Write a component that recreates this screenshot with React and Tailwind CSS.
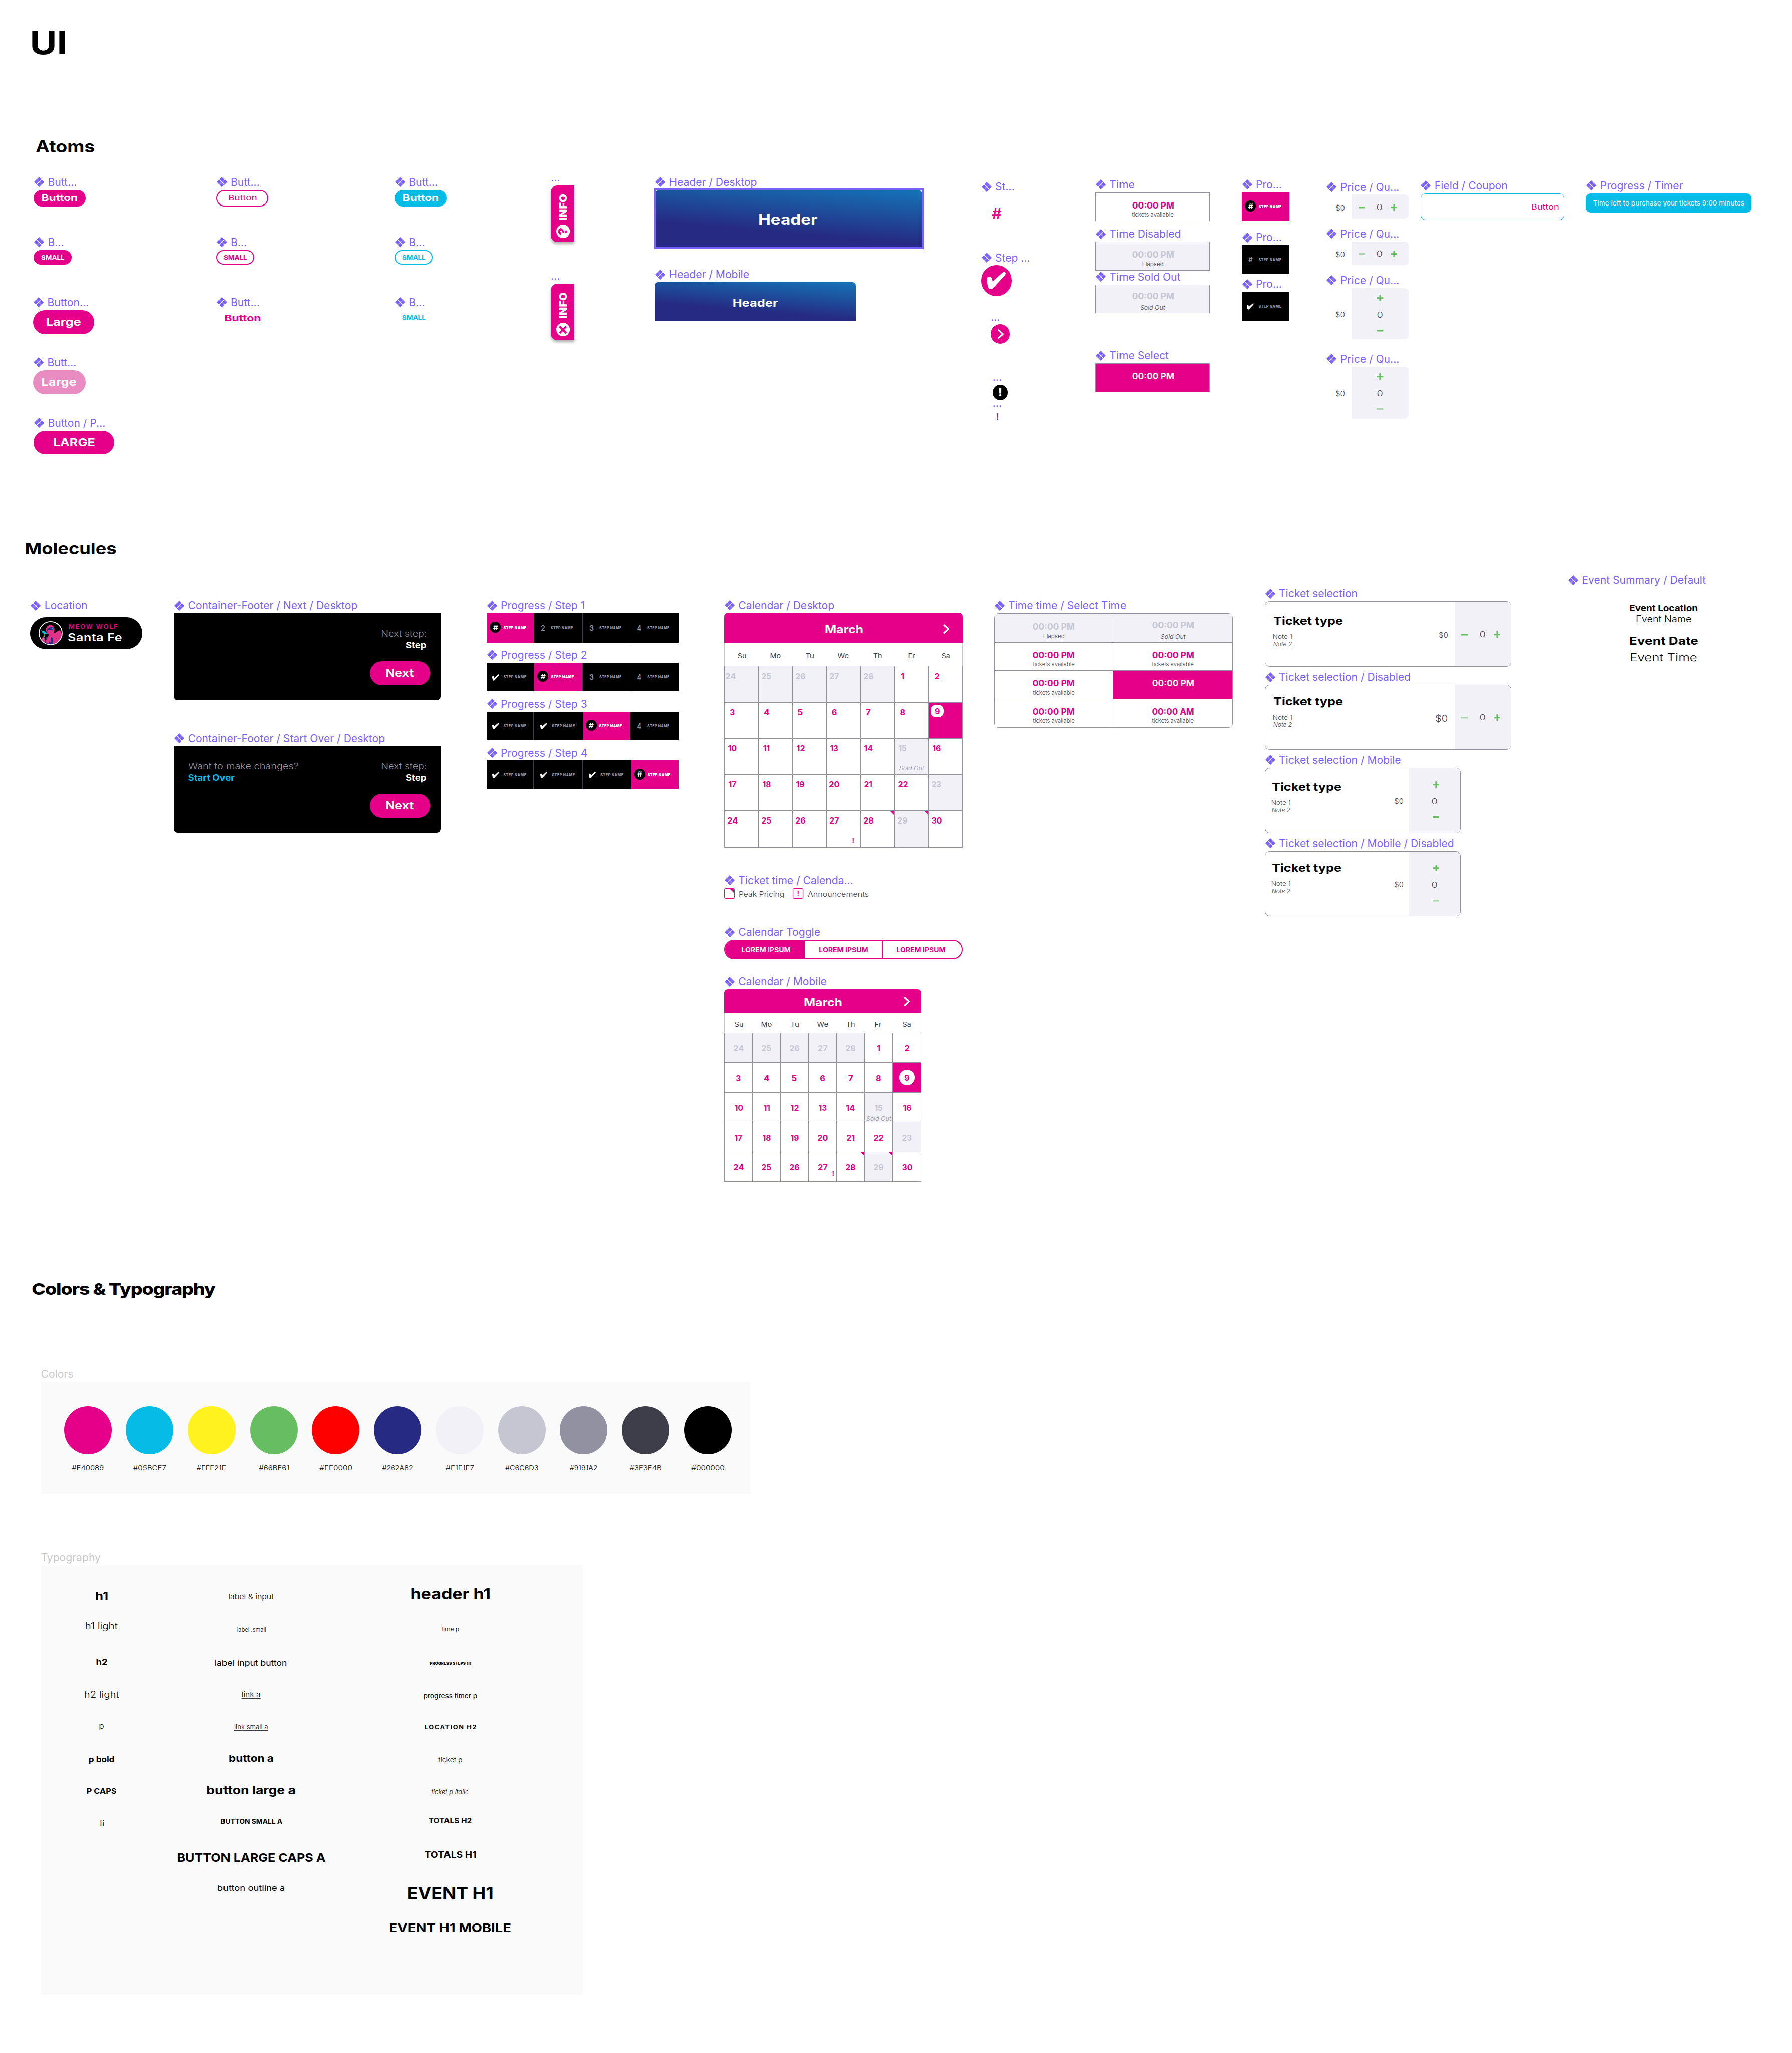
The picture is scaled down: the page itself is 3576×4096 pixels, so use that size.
import React, { useLayoutEffect, useRef, useState } from "react";

let canvas;

/* Text stretched horizontally so that its ink spans `w` pixels and is centred in them. */
function T({ w, className = "", children }) {
  const ref = useRef(null);
  const [transform, setTransform] = useState("none");
  const text = String(children);
  useLayoutEffect(() => {
    const style = getComputedStyle(ref.current);
    canvas = canvas || document.createElement("canvas");
    const ctx = canvas.getContext("2d");
    ctx.font = `${style.fontStyle} ${style.fontWeight} ${style.fontSize} Inter, sans-serif`;
    ctx.letterSpacing = style.letterSpacing === "normal" ? "0px" : style.letterSpacing;
    const m = ctx.measureText(text);
    const ink = m.actualBoundingBoxRight + m.actualBoundingBoxLeft;
    const scale = w / ink;
    const shift = (m.width - m.actualBoundingBoxRight + m.actualBoundingBoxLeft) / 2;
    setTransform(`translate(${shift * scale}px, 0.8px) scaleX(${scale})`);
  }, [w, text]);
  return (
    <span className={`flex shrink-0 justify-center leading-none ${className}`} style={{ width: w }}>
      <span ref={ref} className="shrink-0 whitespace-pre" style={{ transform }}>
        {text}
      </span>
    </span>
  );
}

function ComponentIcon() {
  return (
    <svg viewBox="0 0 21 21" className="h-[21px] w-[21px] shrink-0" fill="#7B61FF">
      <path d="M10.5 0l4.9 4.9-4.9 4.9-4.9-4.9zM10.5 11.2l4.9 4.9-4.9 4.9-4.9-4.9zM4.9 5.6l4.9 4.9-4.9 4.9L0 10.5zM16.1 5.6l4.9 4.9-4.9 4.9-4.9-4.9z" />
    </svg>
  );
}

/* A named component placed on the canvas. */
function Frame({ at, label, bare = false, children }) {
  return (
    <div className={`absolute ${at}`}>
      <div className={`flex h-8 items-center gap-[7.5px] text-[22px] leading-none text-[#7B61FF] ${bare ? "" : "pl-px"}`}>
        {!bare && <ComponentIcon />}
        <span className="whitespace-nowrap">{label}</span>
      </div>
      {children}
    </div>
  );
}

function Check({ className, fill = "#fff" }) {
  return (
    <svg viewBox="0 0 40 37" className={className} fill={fill}>
      <path d="M4 11C8 9.5 11 11 12.3 20.5L33 2C37 -1 41.500 2 38.500 7L14 33.500C10 37.500 5 37 3.500 33C1.500 27 0 18 0 15C.5 12.500 2 11.700 4 11Z" />
    </svg>
  );
}

function Chevron({ className }) {
  return (
    <svg viewBox="0 0 13 20" className={className} fill="none" stroke="#fff" strokeWidth="3.4" strokeLinecap="round" strokeLinejoin="round">
      <path d="M2 2l8.800 8L2 18" />
    </svg>
  );
}

function Plus() {
  return (
    <svg viewBox="0 0 14 14" className="h-[14px] w-[14px] shrink-0" stroke="#66BE61">
      <path d="M0 7h14" strokeWidth="3.200" />
      <path d="M7 0v14" strokeWidth="2.600" />
    </svg>
  );
}

function Minus({ dim }) {
  return (
    <svg viewBox="0 0 14 14" className={`h-[14px] w-[14px] shrink-0 ${dim ? "opacity-50" : ""}`} stroke="#66BE61">
      <path d="M0 7h14" strokeWidth="3.600" />
    </svg>
  );
}

/* ---------- Atoms ---------- */

function Pill({ className, children }) {
  return <div className={`flex items-center justify-center rounded-full ${className}`}>{children}</div>;
}

function InfoTab({ close }) {
  return (
    <div className="flex h-[118px] w-[49px] items-center justify-center rounded-l-[14px] bg-[#E40089] shadow-[0_4px_6px_rgba(0,0,0,0.3)]">
      <div className="flex h-[49px] w-[118px] shrink-0 -rotate-90 items-center pl-[8px] pt-[2px]">
        <div className="flex h-[29px] w-[29px] items-center justify-center rounded-full bg-white">
          {close ? (
            <svg viewBox="0 0 16 16" className="h-[17px] w-[17px]" stroke="#E40089" strokeWidth="4">
              <path d="M1.500 1.500l13 13M14.500 1.500l-13 13" />
            </svg>
          ) : (
            <span className="text-[26px] font-black leading-none text-[#E40089]">?</span>
          )}
        </div>
        <T w={54.5} className="ml-[9px] text-[20.5px] font-black text-white">INFO</T>
      </div>
    </div>
  );
}

function TimeCell({ time = "00:00 PM", kind = "open", className = "" }) {
  const off = kind === "elapsed" || kind === "sold";
  return (
    <div
      className={`flex flex-col items-center ${kind === "sold" ? "pt-[12px]" : "pt-[15px]"} ${
        off ? "bg-[#F1F1F7] text-[#C6C6D3]" : kind === "selected" ? "bg-[#E40089] text-white" : "bg-white text-[#E40089]"
      } ${className}`}
    >
      <div className="flex h-[21px] items-center">
        <T w={87.5} className="text-[17.5px] font-bold">{time}</T>
      </div>
      <div className={`flex h-[18px] items-center text-[#3E3E4B] ${kind === "sold" ? "mt-[5px]" : ""}`}>
        {kind === "open" && <T w={87.5} className="text-[11.5px] font-light">tickets available</T>}
        {kind === "elapsed" && <T w={43} className="text-[11.5px] font-light">Elapsed</T>}
        {kind === "sold" && <T w={52} className="text-[12px] font-light italic">Sold Out</T>}
      </div>
    </div>
  );
}

function StepCell({ kind, n, className = "" }) {
  const active = kind === "active";
  return (
    <div className={`flex h-[60px] shrink-0 border-[#3E3E4B] ${active ? "bg-[#E40089]" : "bg-black"} ${className}`}>
      <div className={`ml-[7px] flex h-[60px] w-[23px] items-center justify-center ${active ? "pb-[3px]" : "pb-px"}`}>
        {active && (
          <div className="flex h-[23px] w-[23px] items-center justify-center rounded-full bg-black">
            <T w={10.5} className="text-[15.5px] font-semibold text-white">#</T>
          </div>
        )}
        {kind === "done" && <Check className="mt-[2px] h-[13.5px] w-[14.5px]" />}
        {kind === "todo" && <T w={9} className="text-[15px] font-semibold text-[#9191A2]">{n}</T>}
      </div>
      <div className="ml-[5px] flex h-[60px] items-center">
        <T
          w={kind === "todo" && n !== "#" ? 46.5 : 48}
          className={`text-[7.2px] tracking-[0.5px] ${active ? "font-black text-white" : "font-extrabold text-[#9191A2]"}`}
        >
          STEP NAME
        </T>
      </div>
    </div>
  );
}

function CounterRow({ dim }) {
  return (
    <div className="flex items-center">
      <Minus dim={dim} />
      <div className="ml-[15px] flex w-[30px] justify-center pb-[3px]">
        <T w={11} className="text-[17px] font-light text-[#3E3E4B]">0</T>
      </div>
      <div className="ml-[8px]"><Plus /></div>
    </div>
  );
}

function CounterColumn({ dim, className = "" }) {
  return (
    <div className="flex flex-col items-center">
      <Plus />
      <div className={`flex h-[53.7px] items-center ${className}`}>
        <T w={11} className="text-[17px] font-light text-[#3E3E4B]">0</T>
      </div>
      <Minus dim={dim} />
    </div>
  );
}

function PriceQuantity({ column, dim }) {
  return (
    <div className="flex w-[171px]">
      <div className="flex w-[53px] items-center pl-[20px] pt-[4px]">
        <T w={18.6} className="text-[15.5px] font-light text-[#3E3E4B]">$0</T>
      </div>
      {column ? (
        <div className="flex h-[107px] w-[118px] justify-center rounded-r-[8px] bg-[#F1F1F7] pt-[14px]">
          <CounterColumn dim={dim} />
        </div>
      ) : (
        <div className="flex h-[50px] w-[118px] items-center rounded-r-[8px] bg-[#F1F1F7] pl-[14px] pt-[2px]">
          <CounterRow dim={dim} />
        </div>
      )}
    </div>
  );
}

/* ---------- Molecules ---------- */

function LocationBadge() {
  return (
    <div className="mt-[7px] flex h-[67px] w-[233px] items-center rounded-full bg-black pl-[17px]">
      <svg viewBox="0 0 50 50" className="h-[50px] w-[50px]">
        <defs>
          <clipPath id="badge"><circle cx="25" cy="25" r="23.500" /></clipPath>
        </defs>
        <g clipPath="url(#badge)">
          <path d="M15 34l10-5 8 3 2 17H15z" fill="#262A82" />
          <path d="M15 17c1-6 6-10 11-9 5 1 7 5 7 10l-1 9-11 1-4-3z" fill="#DE3389" />
          <path d="M17 17c5-5 9-5 14-4l-1 6c-5-2-9-1-13 1z" fill="#262A82" />
          <path d="M22 27l11-2 9-6c4 0 6 4 6 9l3 20H25l-1-9-4 8-6-4z" fill="#DE3389" />
          <path d="M25 32l5 4v12l-7 2 3-10z" fill="#262A82" />
          <path d="M5 38l5-7 4 8v9L4 44z" fill="#DE3389" />
          <path d="M5 19l9 3 3 4-5 1-5-4z" fill="#05BCE7" />
          <path d="M12 26c2 5-2 8-3 13" stroke="#66BE61" strokeWidth="1.200" fill="none" />
          <circle cx="29" cy="15" r="1.400" fill="#05BCE7" />
        </g>
        <circle cx="25" cy="25" r="24" fill="none" stroke="#fff" strokeWidth="1.800" />
      </svg>
      <div className="ml-[12px] flex flex-col">
        <T w={102} className="ml-px text-[12px] font-semibold tracking-[1.500px] text-[#E40089]">MEOW WOLF</T>
        <T w={112} className="mt-[4.500px] text-[22px] font-semibold tracking-[0.5px] text-white">Santa Fe</T>
      </div>
    </div>
  );
}

function ContainerFooter({ startOver }) {
  return (
    <div className="flex h-[180px] w-[555px] justify-between rounded-b-[8px] bg-black pl-[30px] pr-[21px] pt-[29px]">
      <div className="flex flex-col">
        {startOver && (
          <>
            <div className="flex h-[24px] items-center"><T w={228} className="text-[17.4px] font-light text-[#9191A2]">Want to make changes?</T></div>
            <div className="flex h-[24px] items-center"><T w={96} className="text-[17.4px] font-bold text-[#05BCE7]">Start Over</T></div>
          </>
        )}
      </div>
      <div className="flex flex-col items-end">
        <div className="flex h-[24px] items-center pr-[9px]"><T w={93.5} className="text-[17.4px] font-light text-[#9191A2]">Next step:</T></div>
        <div className="flex h-[25px] items-center pr-[9px]"><T w={43} className="text-[17.4px] font-bold text-white">Step</T></div>
        <Pill className="mt-[21px] h-[50px] w-[127px] bg-[#E40089] pb-[3px]">
          <T w={58.5} className="text-[22px] font-bold text-white">Next</T>
        </Pill>
      </div>
    </div>
  );
}

const DAYS = [["Su", 17.5], ["Mo", 21.5], ["Tu", 17], ["We", 23.5], ["Th", 17.5], ["Fr", 13.5], ["Sa", 17]];
const DATES = [24, 25, 26, 27, 28, ...Array.from({ length: 30 }, (_, i) => i + 1)];
const OFF = [0, 1, 2, 3, 4, 19, 27, 33];

function dateWidth(n) {
  const per = { 0: 11.6, 1: 6.8, 2: 10.4, 3: 10.2, 4: 11.8, 5: 10.4, 6: 11, 7: 10.4, 8: 11, 9: 11 };
  return String(n).split("").reduce((sum, d) => sum + per[d], 0) - (n > 9 ? 0.4 : 0);
}

function DateText({ n, className = "" }) {
  return <T w={dateWidth(n)} className={`text-[17px] font-bold ${className}`}>{n}</T>;
}

function Calendar({ mobile }) {
  return (
    <div className={mobile ? "w-[409.5px]" : "w-[496.5px]"}>
      <div className={`flex items-center rounded-t-[8px] bg-[#E40089] ${mobile ? "h-[50px] pl-[167px]" : "h-[61px] pl-[211px]"}`}>
        <T w={78} className={`text-[22.5px] font-bold text-white ${mobile ? "mt-[3px]" : "mt-[4px]"}`}>March</T>
        <Chevron className={mobile ? "ml-[128px] mt-[2px] h-[20px] w-[13px]" : "ml-[166px] mt-[3px] h-[20px] w-[13px]"} />
      </div>
      <div className={`grid grid-cols-7 border-x border-b border-[#C6C6D3] bg-white ${mobile ? "h-[40.5px] pt-[5px]" : "h-[49.5px] pt-[5px]"}`}>
        {DAYS.map(([day, w]) => (
          <div key={day} className="flex items-center justify-center">
            <T w={w} className="text-[13.6px] text-[#3E3E4B]">{day}</T>
          </div>
        ))}
      </div>
      <div className="grid grid-cols-7 border-l border-[#9191A2]">
        {DATES.map((n, i) => {
          const off = OFF.includes(i);
          const selected = i === 13;
          return (
            <div
              key={i}
              className={`relative flex border-b border-r border-[#9191A2] ${
                off ? "bg-[#F1F1F7] text-[#C6C6D3]" : selected ? "bg-[#E40089] text-[#E40089]" : "bg-white text-[#E40089]"
              } ${mobile ? "h-[62px] items-center justify-center" : "h-[75.3px]"}`}
            >
              {mobile ? (
                selected ? (
                  <div className="flex h-[33px] w-[33px] items-center justify-center rounded-full bg-white"><DateText n={n} /></div>
                ) : (
                  <DateText n={n} className="mt-px" />
                )
              ) : selected ? (
                <div className="ml-[4px] mt-[4px] flex h-[27px] w-[27px] items-center justify-center rounded-[11px] bg-white"><DateText n={n} /></div>
              ) : (
                <div className={`flex h-[38px] items-center justify-center ${i === 0 ? "w-[24px]" : "w-[32px]"}`}><DateText n={n} /></div>
              )}
              {i === 19 && (
                <div className={mobile ? "absolute bottom-px left-[2.5px]" : "absolute bottom-[7px] left-[9px]"}>
                  <T w={52.5} className="text-[12px] font-light italic text-[#9191A2]">Sold Out</T>
                </div>
              )}
              {i === 31 && (
                <span className={`absolute text-[14px] font-bold leading-none ${mobile ? "bottom-[8px] right-[4px]" : "bottom-[5px] right-[12px]"}`}>!</span>
              )}
              {(i === 32 || i === 33) && (
                <svg viewBox="0 0 9 9" className={`absolute right-0 top-0 ${mobile ? "h-[7px] w-[7px]" : "h-[9px] w-[9px]"}`} fill="#E40089">
                  <path d="M0 0h9v9z" />
                </svg>
              )}
            </div>
          );
        })}
      </div>
    </div>
  );
}

function TicketSelection({ mobile, dim }) {
  return (
    <div className={`flex h-[135.5px] overflow-hidden rounded-[10px] border border-[#9191A2] bg-white ${mobile ? "w-[407.5px]" : "w-[513px]"}`}>
      <div className={`flex flex-1 flex-col ${mobile ? "pl-[13.5px]" : "pl-[17px]"} ${dim ? "pt-[17px]" : "pt-[22px]"}`}>
        <div className="flex h-8 items-center"><T w={144.5} className="text-[22.5px] font-bold text-black">Ticket type</T></div>
        <div className="mt-[9.5px] flex h-[15.6px] items-center"><T w={38.5} className="text-[12.5px] font-light text-[#3E3E4B]">Note 1</T></div>
        <div className="flex h-[15.6px] items-center"><T w={39.5} className="text-[12.5px] font-light italic text-[#3E3E4B]">Note 2</T></div>
      </div>
      <div className={`flex items-center pt-[4px] ${mobile ? "pr-[13px]" : "pr-[14.500px]"}`}>
        {dim && !mobile ? (
          <T w={25} className="text-[20px] font-light text-[#3E3E4B]">$0</T>
        ) : (
          <T w={18.6} className="text-[15.5px] font-light text-[#3E3E4B]">$0</T>
        )}
      </div>
      {mobile ? (
        <div className="flex w-[105.5px] justify-center bg-[#F1F1F7] pl-[5px] pt-[27px]">
          <CounterColumn dim={dim} className="-ml-[5px]" />
        </div>
      ) : (
        <div className="flex w-[116.5px] items-center bg-[#F1F1F7] pl-[14px] pt-px"><CounterRow dim={dim} /></div>
      )}
    </div>
  );
}

/* ---------- Colors & typography ---------- */

const SWATCHES = [
  ["#E40089", "bg-[#E40089]", 66.5],
  ["#05BCE7", "bg-[#05BCE7]", 68.5],
  ["#FFF21F", "bg-[#FFF21F]", 61],
  ["#66BE61", "bg-[#66BE61]", 63],
  ["#FF0000", "bg-[#FF0000]", 68],
  ["#262A82", "bg-[#262A82]", 64.5],
  ["#F1F1F7", "bg-[#F1F1F7]", 58],
  ["#C6C6D3", "bg-[#C6C6D3]", 69],
  ["#9191A2", "bg-[#9191A2]", 58],
  ["#3E3E4B", "bg-[#3E3E4B]", 66],
  ["#000000", "bg-black", 69],
];

const TYPE_COLUMNS = [
  {
    at: "w-[200px] ml-[27px]",
    rows: [
      ["h1", 25, "mt-[46px] text-[23px] font-bold"],
      ["h1 light", 67, "mt-[31px] text-[19px] font-light"],
      ["h2", 23, "mt-[43px] text-[17.5px] font-bold"],
      ["h2 light", 72, "mt-[35px] text-[19px] font-light"],
      ["p", 9.5, "mt-[34px] text-[17px] font-light"],
      ["p bold", 52.5, "mt-[38px] text-[16px] font-bold"],
      ["P CAPS", 61, "mt-[34.5px] text-[15.5px] font-bold"],
      ["li", 7.5, "mt-[34.5px] text-[17px] font-light"],
    ],
  },
  {
    at: "w-[400px] ml-[10.500px]",
    rows: [
      ["label & input", 94, "mt-[49px] text-[15.5px] font-light"],
      ["label .small", 60, "mt-[36.5px] text-[11.5px] font-light"],
      ["label input button", 148, "mt-[36.5px] text-[16.5px]"],
      ["link a", 38, "mt-[34.5px] text-[15.5px] font-light underline decoration-1 underline-offset-2"],
      ["link small a", 69, "mt-[34.5px] text-[13.5px] font-light underline decoration-1 underline-offset-2"],
      ["button a", 92, "mt-[35px] text-[19.5px] font-bold"],
      ["button large a", 183, "mt-[33.5px] text-[24px] font-bold"],
      ["BUTTON SMALL A", 128, "mt-[33px] text-[13.5px] font-bold"],
      ["BUTTON LARGE CAPS A", 307, "mt-[42px] text-[23.5px] font-bold"],
      ["button outline a", 138, "mt-[31px] text-[16px]"],
    ],
  },
  {
    at: "w-[400px] ml-[14.500px]",
    rows: [
      ["header h1", 163.5, "mt-[42px] text-[31.5px] font-bold"],
      ["time p", 36, "mt-[43px] text-[11.5px] font-light"],
      ["PROGRESS STEPS H1", 85, "mt-[38.5px] text-[7.2px] font-black tracking-[0.3px]"],
      ["progress timer p", 110, "mt-[35px] text-[13.5px]"],
      ["LOCATION H2", 106.5, "mt-[34px] text-[12px] font-bold tracking-[1.500px]"],
      ["ticket p", 49, "mt-[35px] text-[13.5px] font-light"],
      ["ticket p italic", 77.5, "mt-[35px] text-[13.500px] font-light italic"],
      ["TOTALS H2", 89, "mt-[28.5px] text-[14.5px] font-bold"],
      ["TOTALS H1", 107, "mt-[38px] text-[17.5px] font-bold"],
      ["EVENT H1", 175, "mt-[47px] text-[35px] font-bold"],
      ["EVENT H1 MOBILE", 252, "mt-[41px] text-[26px] font-bold"],
    ],
  },
];

export default function App() {
  return (
    <div className="h-screen w-full overflow-hidden bg-white">
      <div className="relative h-[4270px] w-[3728px] bg-white font-['Inter',sans-serif] text-black [zoom:0.95923]">
        <h1 className="absolute left-[67px] top-[55px] text-[66px] font-bold leading-none"><T w={69}>UI</T></h1>

        {/* Atoms */}
        <h2 className="absolute left-[74px] top-[287px] text-[34px] font-bold"><T w={122}>Atoms</T></h2>

        <Frame at="left-[70px] top-[363px]" label="Butt...">
          <Pill className="h-[35px] w-[108px] bg-[#E40089] pb-[3px]"><T w={73.5} className="text-[17.5px] font-bold text-white">Button</T></Pill>
        </Frame>
        <Frame at="left-[450px] top-[363px]" label="Butt...">
          <Pill className="h-[35px] w-[108px] border-[2.2px] border-[#E40089] pb-[3px]"><T w={57.5} className="text-[15.5px] text-[#E40089]">Button</T></Pill>
        </Frame>
        <Frame at="left-[821.5px] top-[363px]" label="Butt...">
          <Pill className="h-[35px] w-[108px] bg-[#05BCE7] pb-[3px]"><T w={73.5} className="text-[17.5px] font-bold text-white">Button</T></Pill>
        </Frame>

        <Frame at="left-[70px] top-[488px]" label="B...">
          <Pill className="h-[30px] w-[79px] bg-[#E40089]"><T w={48.5} className="text-[12.8px] font-bold text-white">SMALL</T></Pill>
        </Frame>
        <Frame at="left-[450px] top-[488px]" label="B...">
          <Pill className="h-[30px] w-[79px] border-[2.2px] border-[#E40089]"><T w={48.5} className="text-[12.8px] font-bold text-[#E40089]">SMALL</T></Pill>
        </Frame>
        <Frame at="left-[821.5px] top-[488px]" label="B...">
          <Pill className="h-[30px] w-[79px] border-[2.2px] border-[#05BCE7]"><T w={48.5} className="text-[12.8px] font-bold text-[#05BCE7]">SMALL</T></Pill>
        </Frame>

        <Frame at="left-[69px] top-[613px]" label="Button...">
          <Pill className="h-[50px] w-[127px] bg-[#E40089] pb-[3px]"><T w={72} className="text-[22px] font-bold text-white">Large</T></Pill>
        </Frame>
        <Frame at="left-[450px] top-[613px]" label="Butt...">
          <Pill className="h-[33px] w-[108px]"><T w={74} className="text-[17.5px] font-bold text-[#E40089]">Button</T></Pill>
        </Frame>
        <Frame at="left-[821.5px] top-[613px]" label="B...">
          <Pill className="h-[31px] w-[79px]"><T w={49} className="text-[12.8px] font-bold text-[#05BCE7]">SMALL</T></Pill>
        </Frame>

        <Frame at="left-[69px] top-[738px]" label="Butt...">
          <Pill className="h-[50px] w-[109px] bg-[#E88CC2] pb-[3px]"><T w={72} className="text-[22px] font-bold text-white">Large</T></Pill>
        </Frame>
        <Frame at="left-[70px] top-[863px]" label="Button / P...">
          <Pill className="h-[50px] w-[168px] bg-[#E40089] pb-[2px]"><T w={86} className="text-[22px] font-bold text-white">LARGE</T></Pill>
        </Frame>

        <Frame at="left-[1146px] top-[354px]" label="..." bare><InfoTab /></Frame>
        <Frame at="left-[1146px] top-[558px]" label="..." bare><InfoTab close /></Frame>

        <Frame at="left-[1362.5px] top-[362.5px]" label="Header / Desktop">
          <div className="-ml-[2.5px] -mt-[2.5px] h-[126px] w-[561px] border-[4.2px] border-[#7B61FF] bg-white">
            <div className="flex h-full items-center justify-center rounded-t-[5px] bg-[linear-gradient(5deg,#262A82_32%,#1574B7_100%)]">
              <T w={121} className="text-[30.5px] font-bold text-white">Header</T>
            </div>
          </div>
        </Frame>
        <Frame at="left-[1362.5px] top-[555px]" label="Header / Mobile">
          <div className="flex h-[80px] w-[418.500px] items-center justify-center rounded-t-[7px] bg-[linear-gradient(5deg,#262A82_32%,#1574B7_100%)] pt-[3px]">
            <T w={93} className="text-[23px] font-bold text-white">Header</T>
          </div>
        </Frame>

        <Frame at="left-[2041px] top-[372.5px]" label="St...">
          <div className="flex h-[76px] w-[65px] items-center justify-center"><T w={21} className="text-[30.5px] font-semibold text-[#E40089]">#</T></div>
        </Frame>
        <Frame at="left-[2041px] top-[520px]" label="Step ...">
          <div className="flex h-[64px] w-[64px] items-center justify-center rounded-full bg-[#E40089]"><Check className="h-[37px] w-[40px]" /></div>
        </Frame>
        <Frame at="left-[2061px] top-[643px]" label="..." bare>
          <div className="flex h-[40px] w-[40px] items-center justify-center rounded-full bg-[#E40089] pl-[2px]"><Chevron className="h-[20px] w-[13px]" /></div>
        </Frame>
        <Frame at="left-[2065px] top-[769px]" label="..." bare>
          <div className="flex h-[31.5px] w-[31.5px] items-center justify-center rounded-full bg-black text-[24px] font-extrabold leading-none text-white">!</div>
        </Frame>
        <Frame at="left-[2065px] top-[823px]" label="..." bare>
          <div className="flex h-[21px] w-[20px] items-center justify-center text-[18px] font-bold leading-none text-[#E40089]">!</div>
        </Frame>

        <Frame at="left-[2279px] top-[368px]" label="Time"><TimeCell className="h-[60px] w-[238px] border border-[#9191A2]" /></Frame>
        <Frame at="left-[2279px] top-[470.5px]" label="Time Disabled"><TimeCell kind="elapsed" className="h-[60px] w-[238px] border border-[#9191A2]" /></Frame>
        <Frame at="left-[2279px] top-[560px]" label="Time Sold Out"><TimeCell kind="sold" className="h-[60px] w-[238px] border border-[#9191A2]" /></Frame>
        <Frame at="left-[2279px] top-[724px]" label="Time Select"><TimeCell kind="selected" className="h-[60px] w-[238px] border border-[#9191A2]" /></Frame>

        <Frame at="left-[2583px] top-[368px]" label="Pro..."><StepCell kind="active" className="w-[99px]" /></Frame>
        <Frame at="left-[2583px] top-[478px]" label="Pro..."><StepCell kind="todo" n="#" className="w-[99px]" /></Frame>
        <Frame at="left-[2583px] top-[575px]" label="Pro..."><StepCell kind="done" className="w-[99px]" /></Frame>

        <Frame at="left-[2759px] top-[373px]" label="Price / Qu..."><PriceQuantity /></Frame>
        <Frame at="left-[2759px] top-[470px]" label="Price / Qu..."><PriceQuantity dim /></Frame>
        <Frame at="left-[2759px] top-[567px]" label="Price / Qu..."><PriceQuantity column /></Frame>
        <Frame at="left-[2759px] top-[731px]" label="Price / Qu..."><PriceQuantity column dim /></Frame>

        <Frame at="left-[2955px] top-[370px]" label="Field / Coupon">
          <div className="flex h-[56px] w-[300px] items-center justify-end rounded-[10px] border-[1.5px] border-[#05BCE7] pr-[11px] pt-px">
            <T w={56} className="text-[15.5px] text-[#E40089]">Button</T>
          </div>
        </Frame>
        <Frame at="left-[3299px] top-[370px]" label="Progress / Timer">
          <div className="flex h-[40px] w-[345px] items-center justify-center rounded-[10px] bg-[#05BCE7]">
            <T w={315} className="text-[13.5px] text-white">Time left to purchase your tickets 9:00 minutes</T>
          </div>
        </Frame>

        {/* Molecules */}
        <h2 className="absolute left-[54px] top-[1123.5px] text-[33px] font-bold"><T w={188}>Molecules</T></h2>

        <Frame at="left-[63px] top-[1244px]" label="Location"><LocationBadge /></Frame>
        <Frame at="left-[362px] top-[1244px]" label="Container-Footer / Next / Desktop"><ContainerFooter /></Frame>
        <Frame at="left-[362px] top-[1520px]" label="Container-Footer / Start Over / Desktop"><ContainerFooter startOver /></Frame>

        <Frame at="left-[1012px] top-[1244px]" label="Progress / Step 1">
          <div className="flex">
            <StepCell kind="active" className="w-[99px]" />
            <StepCell kind="todo" n="2" className="w-[101px] border-r-[2.2px]" />
            <StepCell kind="todo" n="3" className="w-[100px] border-r" />
            <StepCell kind="todo" n="4" className="w-[100px]" />
          </div>
        </Frame>
        <Frame at="left-[1012px] top-[1346px]" label="Progress / Step 2">
          <div className="flex">
            <StepCell kind="done" className="w-[99px]" />
            <StepCell kind="active" className="w-[101px] border-r-[2.2px]" />
            <StepCell kind="todo" n="3" className="w-[100px] border-r" />
            <StepCell kind="todo" n="4" className="w-[100px]" />
          </div>
        </Frame>
        <Frame at="left-[1012px] top-[1448px]" label="Progress / Step 3">
          <div className="flex">
            <StepCell kind="done" className="w-[99px] border-r-[2.2px]" />
            <StepCell kind="done" className="w-[101px] pl-[2px]" />
            <StepCell kind="active" className="w-[100px] border-r" />
            <StepCell kind="todo" n="4" className="w-[100px]" />
          </div>
        </Frame>
        <Frame at="left-[1012px] top-[1550px]" label="Progress / Step 4">
          <div className="flex">
            <StepCell kind="done" className="w-[99px] border-r-[2.2px]" />
            <StepCell kind="done" className="w-[103px] border-r-[2.2px] pl-[2px]" />
            <StepCell kind="done" className="w-[99px]" />
            <StepCell kind="active" className="w-[99px]" />
          </div>
        </Frame>

        <Frame at="left-[1506.5px] top-[1243.5px]" label="Calendar / Desktop"><Calendar /></Frame>
        <Frame at="left-[1506.5px] top-[1815px]" label="Ticket time / Calenda...">
          <div className="flex items-center">
            <div className="relative h-[22px] w-[22px] rounded-[3px] border border-[#E40089]">
              <svg viewBox="0 0 8 8" className="absolute right-[1px] top-[1px] h-[7.5px] w-[7.5px]" fill="#E40089"><path d="M0 0h8v8z" /></svg>
            </div>
            <T w={93} className="ml-[9px] mt-[3px] text-[15px] font-light text-[#3E3E4B]">Peak Pricing</T>
            <div className="ml-[19px] flex h-[22px] w-[22px] items-center justify-center rounded-[3px] border border-[#E40089] text-[14px] font-bold leading-none text-[#E40089]">!</div>
            <T w={126.5} className="ml-[9.5px] mt-[2px] text-[15px] font-light text-[#3E3E4B]">Announcements</T>
          </div>
        </Frame>
        <Frame at="left-[1506.5px] top-[1923px]" label="Calendar Toggle">
          <div className="flex h-[40px] w-[496px] overflow-hidden rounded-full border-[2.2px] border-[#E40089] text-[13.5px] font-bold text-[#E40089]">
            <div className="flex w-[166px] items-center justify-center bg-[#E40089] pl-[3px] text-white"><T w={102}>LOREM IPSUM</T></div>
            <div className="flex w-[162px] items-center justify-center border-r-[2.2px] border-[#E40089]"><T w={102}>LOREM IPSUM</T></div>
            <div className="flex flex-1 items-center justify-center pr-[7px]"><T w={102}>LOREM IPSUM</T></div>
          </div>
        </Frame>
        <Frame at="left-[1506.5px] top-[2026px]" label="Calendar / Mobile"><Calendar mobile /></Frame>

        <Frame at="left-[2068px] top-[1244px]" label="Time time / Select Time">
          <div className="grid w-[497px] grid-cols-2 overflow-hidden rounded-[9px] border border-[#9191A2]">
            <TimeCell kind="elapsed" className="h-[59px] border-b border-r border-[#9191A2]" />
            <TimeCell kind="sold" className="h-[59px] border-b border-[#9191A2]" />
            <TimeCell className="h-[59px] border-b border-r border-[#9191A2]" />
            <TimeCell className="h-[59px] border-b border-[#9191A2]" />
            <TimeCell className="h-[59px] border-b border-r border-[#9191A2]" />
            <TimeCell kind="selected" className="h-[59px] border-b border-[#9191A2]" />
            <TimeCell className="h-[58.5px] border-r border-[#9191A2]" />
            <TimeCell time="00:00 AM" className="h-[58.5px]" />
          </div>
        </Frame>

        <Frame at="left-[2631px] top-[1219px]" label="Ticket selection"><TicketSelection /></Frame>
        <Frame at="left-[2631px] top-[1392px]" label="Ticket selection / Disabled"><TicketSelection dim /></Frame>
        <Frame at="left-[2631px] top-[1565px]" label="Ticket selection / Mobile"><TicketSelection mobile /></Frame>
        <Frame at="left-[2631px] top-[1738px]" label="Ticket selection / Mobile / Disabled"><TicketSelection mobile dim /></Frame>

        <Frame at="left-[3261px] top-[1191px]" label="Event Summary / Default">
          <div className="flex w-[400px] flex-col items-center pt-[31px]">
            <div className="flex h-[22px] items-center"><T w={140.5} className="text-[17.5px] font-bold">Event Location</T></div>
            <div className="flex h-[22px] items-center"><T w={115} className="text-[17.5px] font-light">Event Name</T></div>
            <div className="mt-[17px] flex h-[32px] items-center"><T w={142} className="text-[23px] font-bold">Event Date</T></div>
            <div className="mt-[3px] flex h-[32px] items-center"><T w={138} className="text-[23px] font-light">Event Time</T></div>
          </div>
        </Frame>

        {/* Colors & typography */}
        <h2 className="absolute left-[67px] top-[2664px] text-[33px] font-extrabold tracking-[-1px]"><T w={383}>{"Colors & Typography"}</T></h2>

        <section className="absolute left-[85px] top-[2842px]">
          <h3 className="flex h-8 items-center text-[22px] leading-none text-[#C9C9C9]">Colors</h3>
          <div className="flex h-[232.5px] w-[1476.5px] gap-[30px] bg-[#FAFAFA] pl-[48px] pt-[51px]">
            {SWATCHES.map(([name, fill, w]) => (
              <div key={name} className="flex w-[99px] flex-col items-center">
                <div className={`h-[99px] w-[99px] rounded-full ${fill}`} />
                <T w={w} className="mt-[21.5px] text-[13.6px] font-light">{name}</T>
              </div>
            ))}
          </div>
        </section>

        <section className="absolute left-[85px] top-[3224px]">
          <h3 className="flex h-8 items-center text-[22px] leading-none text-[#C9C9C9]">Typography</h3>
          <div className="flex h-[893px] w-[1127.5px] bg-[#FAFAFA]">
            {TYPE_COLUMNS.map(({ at, rows }) => (
              <div key={at} className={`flex shrink-0 flex-col items-center ${at}`}>
                {rows.map(([text, w, style]) => (
                  <T key={text} w={w} className={`h-8 items-center ${style}`}>{text}</T>
                ))}
              </div>
            ))}
          </div>
        </section>
      </div>
    </div>
  );
}
